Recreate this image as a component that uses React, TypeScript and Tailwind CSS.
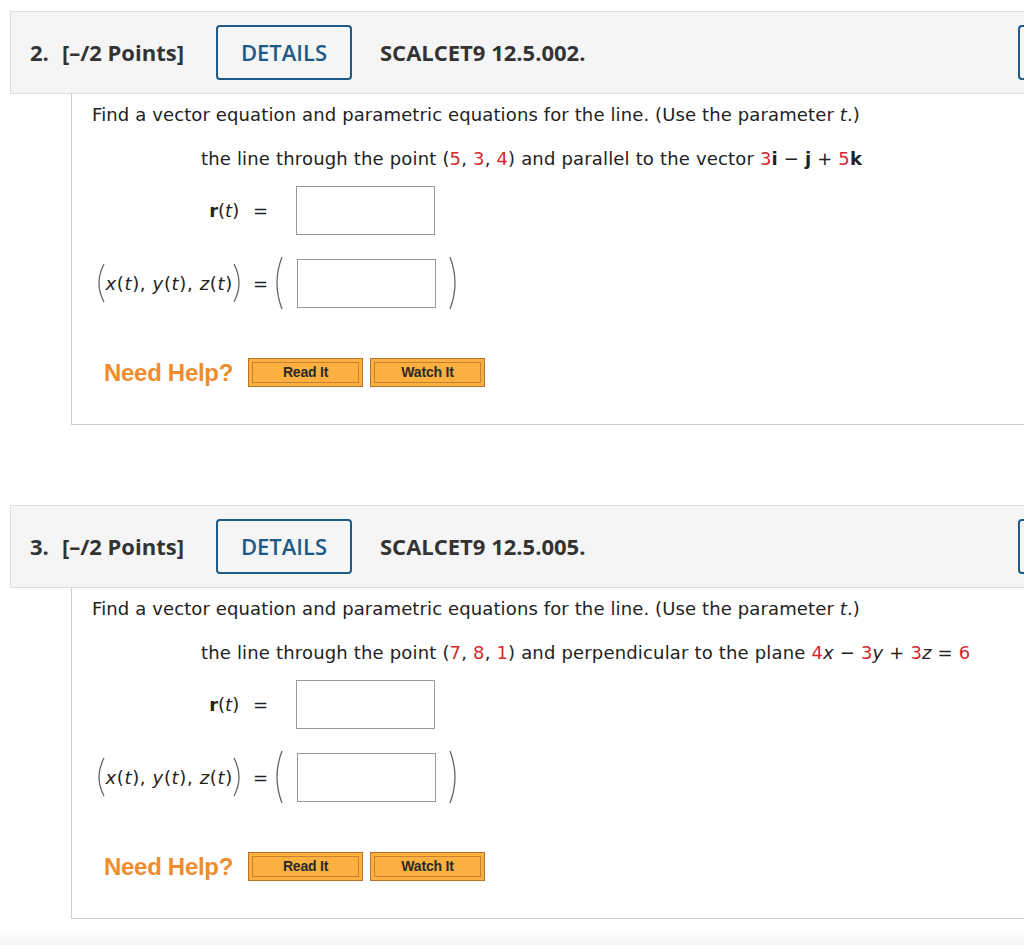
import React from 'react'

const red = 'text-[#d5282e]'

function Paren({ side, h }: { side: 'l' | 'r'; h: number }) {
  const d = side === 'l' ? `M9 1 Q -1 ${h / 2} 9 ${h - 1}` : `M1 1 Q 11 ${h / 2} 1 ${h - 1}`
  return (
    <svg width="10" height={h} viewBox={`0 0 10 ${h}`} className="shrink-0">
      <path d={d} fill="none" stroke="#666" strokeWidth="1.3" />
    </svg>
  )
}

function HelpButton({ label }: { label: string }) {
  return (
    <div className="w-[115px] h-[29px] border border-[#b8712a] bg-[#fbb040] p-[3px]">
      <div className="h-full border border-[#c98030] flex items-center justify-center text-[14px] font-bold text-[#2a2a2a] [font-family:'Liberation_Sans',Arial,sans-serif] tracking-[-0.2px]">
        {label}
      </div>
    </div>
  )
}

function Question({
  num,
  code,
  line,
}: {
  num: number
  code: string
  line: React.ReactNode
}) {
  return (
    <div className="ml-[10px]">
      <div className="relative w-[1030px] h-[83px] border border-[#dcdcdc] bg-[#f5f5f5] flex items-center pl-[19px] [font-family:'Open_Sans',sans-serif] text-[#333]">
        <span className="text-[22px] font-bold w-[186px]">
          {num}.<span className="ml-[13px]">[–/2 Points]</span>
        </span>
        <div className="w-[136px] h-[55px] border-2 border-[#1d5a87] rounded-[4px] flex items-center justify-center text-[22px] font-semibold text-[#1d5a87]">
          DETAILS
        </div>
        <span className="ml-[28px] text-[22px] font-bold">SCALCET9 {code}</span>
        <div className="absolute left-[1007px] w-[30px] h-[55px] border-2 border-[#1d5a87] rounded-[4px]" />
      </div>
      <div className="ml-[61px] h-[331px] border-l border-b border-[#cfcfcf] pl-[20px] pt-[10px] [font-family:'DejaVu_Sans',Verdana,sans-serif] text-[18px] text-[#222]">
        <div className="h-[22px] leading-[22px] tracking-[0.12px]">
          Find a vector equation and parametric equations for the line. (Use the parameter <i>t</i>.)
        </div>
        <div className="mt-[22px] h-[22px] leading-[22px] pl-[109px] tracking-[0.17px]">{line}</div>
        <div className="mt-[16px] flex items-center h-[49px]">
          <div className="w-[176px] text-right">
            <b>r</b>(<i>t</i>) <span className="ml-[8px]">=</span>
          </div>
          <div className="ml-[28px] w-[139px] h-[49px] border border-[#999] bg-white" />
        </div>
        <div className="mt-[21px] flex items-center h-[54px]">
          <div className="w-[176px] flex items-center justify-end">
            <Paren side="l" h={40} />
            <span className="tracking-[0.65px]">
              <i>x</i>(<i>t</i>), <i>y</i>(<i>t</i>), <i>z</i>(<i>t</i>)
            </span>
            <Paren side="r" h={40} />
            <span className="ml-[10px]">=</span>
          </div>
          <div className="ml-[5px] mr-[14px]">
            <Paren side="l" h={54} />
          </div>
          <div className="w-[139px] h-[49px] border border-[#999] bg-white" />
          <div className="ml-[13px]">
            <Paren side="r" h={54} />
          </div>
        </div>
        <div className="mt-[48px] flex items-center pl-[12px]">
          <span className="text-[24px] leading-[29px] font-bold text-[#ef8d2e] [font-family:'Liberation_Sans',Arial,sans-serif] tracking-[-0.3px]">
            Need Help?
          </span>
          <div className="ml-[15px] flex gap-[7px]">
            <HelpButton label="Read It" />
            <HelpButton label="Watch It" />
          </div>
        </div>
      </div>
    </div>
  )
}

export default function App() {
  return (
    <div className="relative w-[1024px] h-[945px] overflow-hidden bg-white">
      <div className="pt-[11px]">
        <Question
          num={2}
          code="12.5.002."
          line={
            <>
              the line through the point (<span className={red}>5</span>, <span className={red}>3</span>,{' '}
              <span className={red}>4</span>) and parallel to the vector <span className={red}>3</span>
              <b>i</b> − <b>j</b> + <span className={red}>5</span>
              <b>k</b>
            </>
          }
        />
        <div className="h-[80px]" />
        <Question
          num={3}
          code="12.5.005."
          line={
            <>
              the line through the point (<span className={red}>7</span>, <span className={red}>8</span>,{' '}
              <span className={red}>1</span>) and perpendicular to the plane <span className={red}>4</span>
              <i>x</i> − <span className={red}>3</span>
              <i>y</i> + <span className={red}>3</span>
              <i>z</i> = <span className={red}>6</span>
            </>
          }
        />
      </div>
      <div className="absolute left-0 right-0 bottom-0 h-[15px] bg-gradient-to-b from-white to-[#f6f6f6]" />
    </div>
  )
}
